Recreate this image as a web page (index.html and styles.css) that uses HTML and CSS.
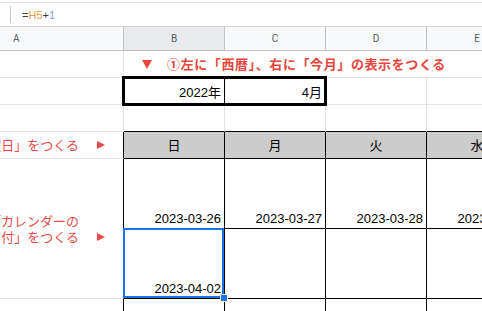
FILE: index.html
```html
<!DOCTYPE html>
<html lang="ja">
<head>
<meta charset="utf-8">
<title>Sheet</title>
<link rel="stylesheet" href="styles.css">
</head>
<body>
<div class="topbar"></div>
<div class="fbar"><span class="fsep"></span><span class="formula">=<span class="f-ref">H5</span>+<span class="f-num">1</span></span></div>
<div class="sheet">
  <div class="c hd hd-a">A</div>
  <div class="c hd hd-sel">B</div>
  <div class="c hd">C</div>
  <div class="c hd">D</div>
  <div class="c hd">E</div>

  <div class="c"></div>
  <div class="c note-top"><span class="tri-down"></span><span>①左に「西暦」、右に「今月」の表示をつくる</span></div>

  <div class="c"></div>
  <div class="c val b-rk">2022年</div>
  <div class="c val">4月</div>
  <div class="c"></div>
  <div class="c"></div>

  <div class="c"></div>
  <div class="c b-bk"></div>
  <div class="c b-bk"></div>
  <div class="c b-bk"></div>
  <div class="c b-bk"></div>

  <div class="c note b-rk"><span class="note-line"><span>②「曜日」をつくる</span><span class="tri-right"></span></span></div>
  <div class="c day">日</div>
  <div class="c day">月</div>
  <div class="c day">火</div>
  <div class="c day">水</div>

  <div class="c note note-2 b-rk"><span class="note-line"><span>③「カレンダーの</span><span class="tri-space"></span></span><span class="note-line"><span>日付」をつくる</span><span class="tri-right"></span></span></div>
  <div class="c date">2023-03-26</div>
  <div class="c date">2023-03-27</div>
  <div class="c date">2023-03-28</div>
  <div class="c date">2023-03-29</div>

  <div class="c date">2023-04-02</div>
  <div class="c date"></div>
  <div class="c date"></div>
  <div class="c date"></div>

  <div class="c b-rk"></div>
  <div class="c date"></div>
  <div class="c date"></div>
  <div class="c date"></div>
  <div class="c date"></div>

  <div class="thick-box"></div>
  <div class="sel-box"><span class="handle"></span></div>
</div>
</body>
</html>
```

FILE: styles.css
```css
* { box-sizing: border-box; }

body {
  margin: 0;
  width: 482px;
  height: 311px;
  overflow: hidden;
  background: #fff;
  font-family: "Liberation Sans", "Noto Sans CJK JP", sans-serif;
}

.topbar {
  height: 3px;
  border-bottom: 1px solid #e3e3e3;
}

.fbar {
  height: 24px;
  border-bottom: 1px solid #d3d3d3;
  display: flex;
  align-items: center;
  padding-left: 10px;
}

.fsep {
  width: 1px;
  height: 17px;
  background: #c7c7c7;
  margin-right: 11px;
}

.formula {
  font-family: "Liberation Sans", Arial, sans-serif;
  font-size: 11px;
  color: #3c4043;
  line-height: 14px;
}

.f-ref { color: #f29b3f; }
.f-num { color: #7d9ded; }

.sheet {
  position: relative;
  display: grid;
  grid-template-columns: 124px repeat(4, 101px);
  grid-template-rows: 24px 27px 27px 27px 27px 70px 70px 40px;
}

.c {
  border-right: 1px solid #e2e2e2;
  border-bottom: 1px solid #e2e2e2;
  font-size: 13px;
  line-height: 16px;
  color: #000;
  display: flex;
  align-items: flex-end;
  justify-content: flex-end;
  padding: 0 3px 1px;
  overflow: hidden;
  white-space: nowrap;
}

.hd {
  background: #f8f9fa;
  border-right-color: #c4c4c4;
  border-bottom-color: #c0c0c0;
  font-family: Roboto, sans-serif;
  font-size: 10px;
  color: #575b60;
  align-items: center;
  justify-content: center;
  padding: 0;
}

.hd-a {
  justify-content: flex-start;
  padding-left: 13px;
}

.hd-sel { background: #e8eaed; }

.note-top {
  grid-column: 2 / 6;
  border-right: 0;
  justify-content: flex-start;
  align-items: center;
  padding: 0 0 0 18px;
  color: #e8453c;
  font-family: "Noto Sans CJK JP", sans-serif;
  font-weight: 700;
  letter-spacing: 0.6px;
}

.tri-down {
  width: 0;
  height: 0;
  border-left: 5px solid transparent;
  border-right: 5px solid transparent;
  border-top: 9px solid #e8453c;
  margin-right: 15px;
}

.val {
  padding-bottom: 3px;
  padding-right: 3px;
}

.b-rk { border-right-color: #000; }
.b-bk { border-bottom-color: #000; }

.note {
  color: #ea4a43;
  font-family: "Noto Sans CJK JP", sans-serif;
  align-items: center;
  padding: 0 18px 0 0;
}

.note-2 {
  grid-row: span 2;
  flex-direction: column;
  justify-content: center;
  align-items: flex-end;
}

.note-line {
  display: flex;
  align-items: center;
  flex-shrink: 0;
}

.note-line > span:first-child { flex-shrink: 0; }

.tri-right {
  flex-shrink: 0;
  width: 0;
  height: 0;
  border-top: 4.5px solid transparent;
  border-bottom: 4.5px solid transparent;
  border-left: 8px solid #ea4a43;
  margin-left: 18px;
}

.tri-space {
  flex-shrink: 0;
  width: 8px;
  margin-left: 18px;
}

.day {
  background: #cccccc;
  border-right-color: #000;
  border-bottom-color: #000;
  justify-content: center;
  align-items: center;
  padding: 0;
  font-family: "Noto Sans CJK JP", sans-serif;
}

.date {
  border-right-color: #000;
  border-bottom-color: #000;
}

.thick-box {
  position: absolute;
  grid-row: 3 / 4;
  grid-column: 2 / 4;
  top: -2px;
  left: -2px;
  right: -1px;
  bottom: -1px;
  border: 3px solid #000;
}

.sel-box {
  position: absolute;
  grid-row: 7 / 8;
  grid-column: 2 / 3;
  top: -1px;
  left: -1px;
  right: 1px;
  bottom: 1px;
  border: 2px solid #1a73e8;
}

.handle {
  position: absolute;
  right: -6px;
  bottom: -6px;
  width: 8px;
  height: 8px;
  background: #1a73e8;
  border: 1px solid #fff;
}
```
